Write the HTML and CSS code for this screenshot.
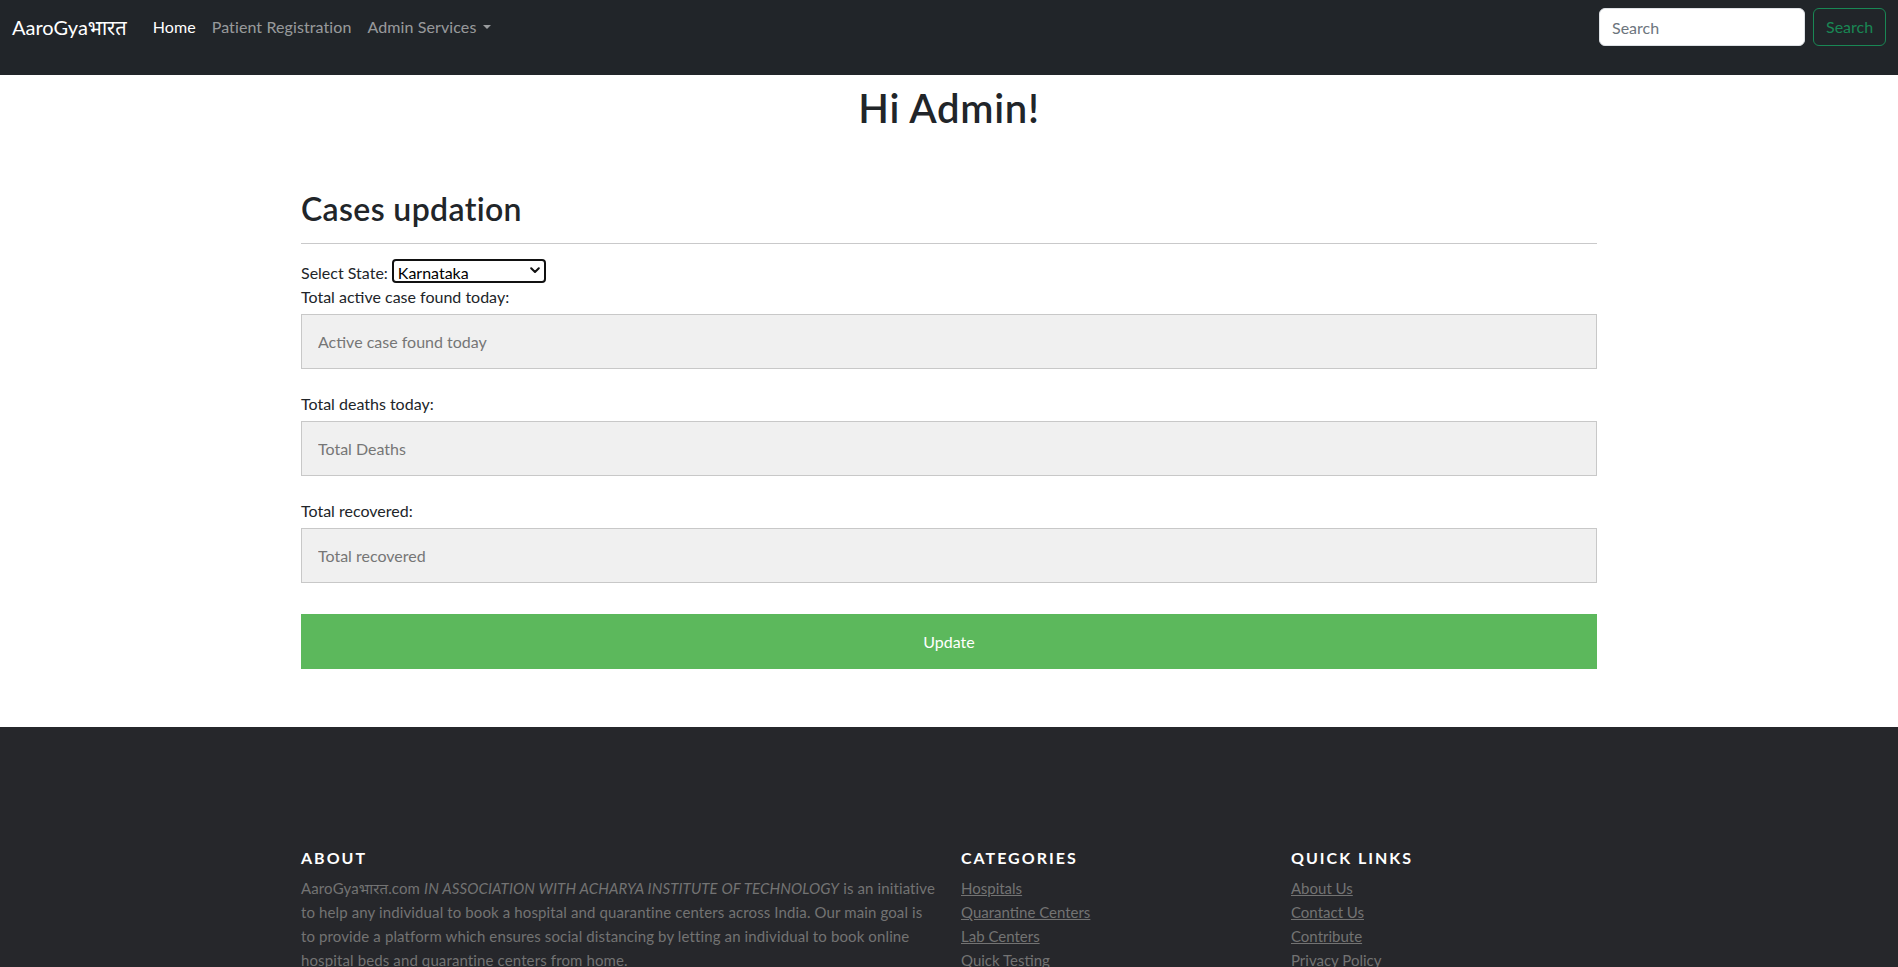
FILE: index.html
```html
<!DOCTYPE html>
<html lang="en">
<head>
<meta charset="utf-8">
<title>AaroGyaभारत - Admin</title>
<link rel="stylesheet" href="styles.css">
</head>
<body>
<nav class="navbar">
  <div class="nav-left">
    <a class="brand" href="#">AaroGyaभारत</a>
    <ul class="nav">
      <li><a class="nav-link active" href="#">Home</a></li>
      <li><a class="nav-link" href="#">Patient Registration</a></li>
      <li><a class="nav-link" href="#">Admin Services<span class="caret"></span></a></li>
    </ul>
  </div>
  <form class="search">
    <input class="search-input" type="search" placeholder="Search">
    <button class="search-btn" type="button">Search</button>
  </form>
</nav>

<main class="container">
  <h1 class="greeting">Hi Admin!</h1>
  <h2 class="section-title">Cases updation</h2>
  <hr class="divider">
  <form class="cases-form">
    <div class="state-row">
      <label for="state">Select State:</label>
      <div class="select-wrap">
        <select id="state" class="state-select">
          <option>Karnataka</option>
          <option>Kerala</option>
          <option>Maharashtra</option>
          <option>Tamil Nadu</option>
        </select>
        <svg class="chevron" width="10" height="7" viewBox="0 0 10 7"><path d="M1.2 1.2 5 5 8.8 1.2" fill="none" stroke="#111" stroke-width="2" stroke-linecap="round" stroke-linejoin="round"/></svg>
      </div>
    </div>
    <label class="field-label" for="active">Total active case found today:</label>
    <input class="field" id="active" type="text" placeholder="Active case found today">
    <label class="field-label" for="deaths">Total deaths today:</label>
    <input class="field" id="deaths" type="text" placeholder="Total Deaths">
    <label class="field-label" for="recovered">Total recovered:</label>
    <input class="field" id="recovered" type="text" placeholder="Total recovered">
    <button class="update-btn" type="button">Update</button>
  </form>
</main>

<footer class="site-footer">
  <div class="footer-row">
    <div class="col-about">
      <h6 class="footer-title">About</h6>
      <p class="about-text"><span>AaroGyaभारत.com</span> <i>IN ASSOCIATION WITH ACHARYA INSTITUTE OF TECHNOLOGY</i> <span>is an initiative to help any individual to book a hospital and quarantine centers across India. Our main goal is to provide a platform which ensures social distancing by letting an individual to book online hospital beds and quarantine centers from home.</span></p>
    </div>
    <div class="col-links">
      <h6 class="footer-title">Categories</h6>
      <ul class="footer-links">
        <li><a href="#">Hospitals</a></li>
        <li><a href="#">Quarantine Centers</a></li>
        <li><a href="#">Lab Centers</a></li>
        <li><a href="#">Quick Testing</a></li>
      </ul>
    </div>
    <div class="col-links">
      <h6 class="footer-title">Quick Links</h6>
      <ul class="footer-links">
        <li><a href="#">About Us</a></li>
        <li><a href="#">Contact Us</a></li>
        <li><a href="#">Contribute</a></li>
        <li><a href="#">Privacy Policy</a></li>
      </ul>
    </div>
  </div>
</footer>
</body>
</html>
```

FILE: styles.css
```css
html {
  scrollbar-width: none;
}

body {
  margin: 0;
  font-family: Lato, "Noto Sans Devanagari", "Lohit Devanagari", "FreeSans", "Noto Sans", sans-serif;
  font-size: 16px;
  line-height: 1.5;
  color: #212529;
  background: #fff;
}

/* ---------- navbar ---------- */
.navbar {
  box-sizing: border-box;
  height: 75px;
  padding: 8px 12px;
  background: #212529;
  display: flex;
  align-items: flex-start;
  justify-content: space-between;
}

.nav-left {
  display: flex;
  align-items: center;
  height: 38px;
}

.brand {
  color: #fff;
  font-size: 20px;
  line-height: 30px;
  text-decoration: none;
  margin-right: 18px;
}

.nav {
  display: flex;
  list-style: none;
  margin: 0;
  padding: 0;
}

.nav-link {
  display: block;
  padding: 8px;
  color: rgba(255, 255, 255, 0.55);
  text-decoration: none;
  line-height: 24px;
  letter-spacing: 0.1px;
}

.nav-link.active {
  color: #fff;
}

.caret {
  display: inline-block;
  margin-left: 0.4em;
  vertical-align: 0.255em;
  border-top: 0.3em solid;
  border-left: 0.3em solid transparent;
  border-right: 0.3em solid transparent;
  border-bottom: 0;
}

.search {
  display: flex;
  align-items: center;
  gap: 8px;
}

.search-input {
  box-sizing: border-box;
  width: 206px;
  height: 38px;
  padding: 6px 12px;
  font: inherit;
  color: #212529;
  background: #fff;
  border: 1px solid #dee2e6;
  border-radius: 6px;
}

.search-input::placeholder {
  color: #6c757d;
}

.search-btn {
  box-sizing: border-box;
  width: 73px;
  height: 38px;
  padding: 6px 12px;
  font: inherit;
  color: #198754;
  background: transparent;
  border: 1px solid #198754;
  border-radius: 6px;
}

/* ---------- main ---------- */
.container {
  width: 1296px;
  margin: 0 auto;
  padding-bottom: 58px;
}

.greeting {
  margin: 9px 0 0;
  font-size: 40px;
  font-weight: 600;
  line-height: 1.2;
  letter-spacing: 0.7px;
  text-align: center;
}

.section-title {
  margin: 58px 0 15px;
  font-size: 32px;
  font-weight: 600;
  line-height: 1.2;
  letter-spacing: 0.35px;
}

.divider {
  margin: 0 0 16px;
  border: 0;
  border-top: 1px solid #c9c9ca;
}

.cases-form {
  display: flex;
  flex-direction: column;
}

.state-row {
  display: flex;
  align-items: center;
  height: 24px;
}

.state-row label {
  line-height: 24px;
  padding-top: 2px;
}

.select-wrap {
  position: relative;
  margin-left: 4px;
}

.state-select {
  appearance: none;
  -webkit-appearance: none;
  box-sizing: border-box;
  width: 154px;
  height: 24px;
  padding: 2px 20px 0 4px;
  font: inherit;
  line-height: 20px;
  color: #000;
  background: #fff;
  border: 2px solid #111;
  border-radius: 4px;
}

.chevron {
  position: absolute;
  right: 6px;
  top: 8px;
  pointer-events: none;
}

.field-label {
  display: block;
  box-sizing: border-box;
  height: 24px;
  padding-top: 1px;
  line-height: 24px;
  margin-bottom: 6px;
}

.field {
  box-sizing: border-box;
  width: 100%;
  height: 55px;
  margin-bottom: 22px;
  padding: 0 16px;
  font: inherit;
  color: #212529;
  background: #f0f0f0;
  border: 1px solid #c8c8c8;
}

.field::placeholder {
  color: #767676;
}

.update-btn {
  height: 55px;
  margin-top: 9px;
  font: inherit;
  color: #fff;
  background: #5cb85c;
  border: 0;
}

/* ---------- footer ---------- */
.site-footer {
  background: #26272b;
  padding: 116px 0 20px;
  font-size: 15px;
  line-height: 24px;
  color: #737373;
}

.footer-row {
  width: 1320px;
  margin: 0 auto;
  display: grid;
  grid-template-columns: 660px 330px 330px;
}

.col-about,
.col-links {
  padding: 0 12px;
}

.footer-title {
  margin: 5px 0 8px;
  font-size: 16px;
  font-weight: 700;
  line-height: 1.2;
  letter-spacing: 2px;
  text-transform: uppercase;
  color: #fff;
}

.about-text {
  margin: 0;
  letter-spacing: 0.12px;
}

.footer-links {
  margin: 0;
  padding: 0;
  list-style: none;
}

.footer-links a {
  color: #737373;
}
```
